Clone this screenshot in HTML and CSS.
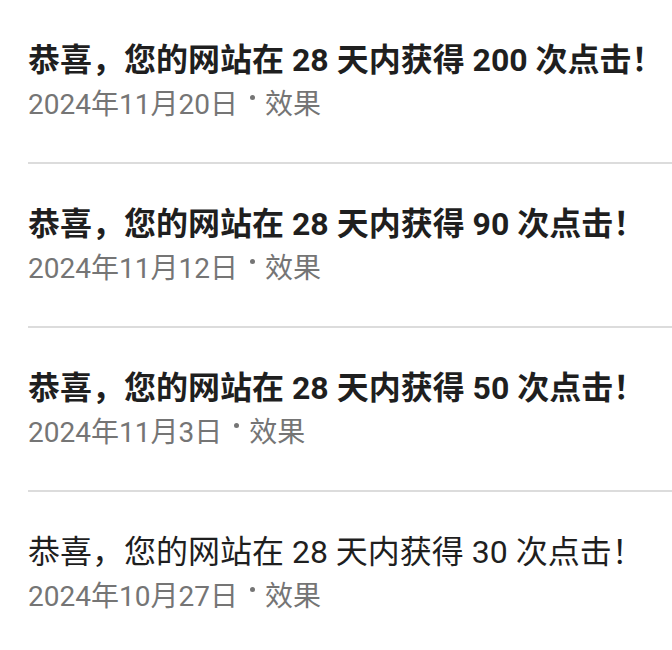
FILE: index.html
```html
<!DOCTYPE html>
<html lang="zh-CN">
<head>
<meta charset="utf-8">
<link rel="stylesheet" href="styles.css">
</head>
<body>
<ul class="list">
  <li class="item unread">
    <div class="title">恭喜，您的网站在 28 天内获得 200 次点击！</div>
    <div class="meta">2024年11月20日<span class="dot"></span>效果</div>
  </li>
  <li class="item unread">
    <div class="title">恭喜，您的网站在 28 天内获得 90 次点击！</div>
    <div class="meta">2024年11月12日<span class="dot"></span>效果</div>
  </li>
  <li class="item unread">
    <div class="title">恭喜，您的网站在 28 天内获得 50 次点击！</div>
    <div class="meta">2024年11月3日<span class="dot"></span>效果</div>
  </li>
  <li class="item">
    <div class="title">恭喜，您的网站在 28 天内获得 30 次点击！</div>
    <div class="meta">2024年10月27日<span class="dot"></span>效果</div>
  </li>
</ul>
</body>
</html>
```

FILE: styles.css
```css
html, body {
  margin: 0;
  padding: 0;
  background: #ffffff;
}
body {
  font-family: Roboto, "Noto Sans CJK SC", sans-serif;
  overflow: hidden;
}
.list {
  list-style: none;
  margin: 0;
  padding: 0 0 0 28px;
}
.item {
  padding: 36px 0 36px 0;
  border-bottom: 2px solid #dcdcdc;
}
.title {
  font-size: 32px;
  line-height: 48px;
  height: 48px;
  color: #1f1f1f;
  white-space: nowrap;
}
.unread .title {
  font-weight: 700;
}
.meta {
  font-size: 28px;
  line-height: 42px;
  height: 42px;
  color: #757575;
  white-space: nowrap;
}
.dot {
  display: inline-block;
  width: 5px;
  height: 5px;
  border-radius: 50%;
  background: #757575;
  vertical-align: 14px;
  margin: 0 10px 0 12px;
}
```
